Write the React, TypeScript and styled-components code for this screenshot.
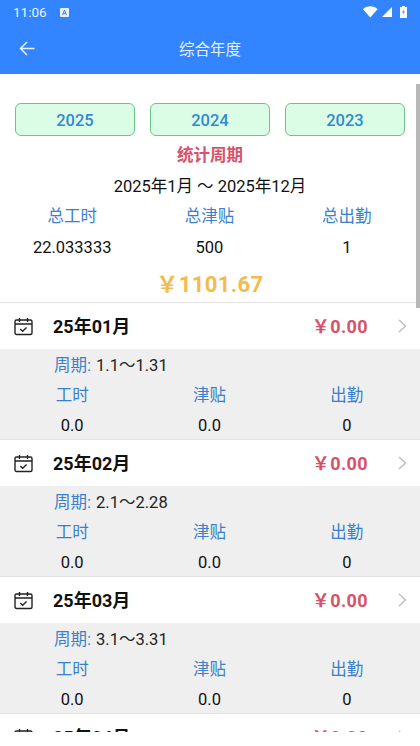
import React from "react";
import styled, { createGlobalStyle } from "styled-components";

const GlobalStyle = createGlobalStyle`
  html, body {
    margin: 0;
    padding: 0;
    background: #fff;
    font-family: Roboto, "Noto Sans CJK SC", sans-serif;
  }
  * { box-sizing: border-box; }
`;

const Screen = styled.div`
  position: relative;
  width: 420px;
  height: 746px;
  overflow: hidden;
  background: #fff;
`;

const Top = styled.header`
  height: 74px;
  background: #3385ff;
  color: #fff;
`;

const StatusBar = styled.div`
  height: 24px;
  padding: 0 13px 0 13px;
  display: flex;
  align-items: center;
  gap: 13px;
  font-size: 13.5px;
  color: #e8f1ff;
`;

const StatusRight = styled.div`
  margin-left: auto;
  display: flex;
  align-items: center;
  gap: 7px;
`;

const NavBar = styled.div`
  height: 48px;
  padding: 0 17px 0 19px;
  display: flex;
  align-items: center;
`;

const Title = styled.div`
  flex: 1;
  text-align: center;
  font-size: 15.5px;
  padding-right: 18px;
  color: #e8f1ff;
`;

const Body = styled.main`
  height: 658px;
  overflow: hidden;
`;

const Summary = styled.section`
  padding-top: 29px;
  height: 228px;
  text-align: center;
`;

const Years = styled.div`
  display: flex;
  justify-content: space-between;
  padding: 0 15px;
`;

const YearButton = styled.div`
  width: 120px;
  height: 33px;
  line-height: 33px;
  background: #dcfde5;
  border: 1px solid #6cc487;
  border-radius: 6px;
  color: #2f8ad0;
  font-size: 16.5px;
  font-weight: 500;
  text-align: center;
`;

const PeriodLabel = styled.div`
  margin-top: 8px;
  height: 24px;
  line-height: 24px;
  font-size: 16.5px;
  font-weight: 700;
  color: #d8526a;
`;

const PeriodValue = styled.div`
  margin-top: 7px;
  height: 24px;
  line-height: 24px;
  font-size: 16.5px;
  color: #111;
`;

const Stats = styled.div`
  display: grid;
  grid-template-columns: repeat(3, 1fr);
  padding: 0 4.5px 0 3.5px;
  text-align: center;
`;

const StatLabel = styled.div<{ $top: number }>`
  margin-top: ${(p) => p.$top}px;
  height: 24px;
  line-height: 24px;
  font-size: 16.5px;
  color: #3a80cc;
`;

const StatValue = styled.div<{ $top: number }>`
  margin-top: ${(p) => p.$top}px;
  height: 24px;
  line-height: 24px;
  font-size: 16.5px;
  color: #111;
`;

const Total = styled.div`
  margin-top: 10px;
  height: 30px;
  line-height: 30px;
  font-size: 22px;
  font-weight: 700;
  letter-spacing: 0.4px;
  color: #f2bc4c;
`;

const MonthRow = styled.div`
  height: 47px;
  border-top: 1px solid #e2e2e2;
  padding: 0 13px 0 14px;
  display: flex;
  align-items: center;
  background: #fff;
`;

const MonthName = styled.div`
  margin-left: 20px;
  margin-top: -2px;
  font-size: 18px;
  font-weight: 700;
  color: #111;
`;

const Money = styled.div`
  margin-left: auto;
  margin-right: 30px;
  margin-top: -2px;
  font-size: 18px;
  font-weight: 700;
  letter-spacing: 0.4px;
  color: #d8526a;
`;

const Detail = styled.div`
  height: 90px;
  background: #efefef;
  padding-top: 4px;
`;

const Cycle = styled.div`
  height: 24px;
  line-height: 24px;
  margin-top: 1px;
  padding-left: 54px;
  font-size: 16.5px;
  color: #222;
`;

const CycleKey = styled.span`
  color: #3a80cc;
  margin-right: 1px;
`;

const Scrollbar = styled.div`
  position: absolute;
  right: 0;
  top: 84px;
  width: 4px;
  height: 224px;
  background: #b8b8b8;
`;

const CalendarIcon = () => (
  <svg width="19" height="19" viewBox="0 0 19 19" fill="none" stroke="#222" strokeWidth="1.4">
    <rect x="1" y="3" width="17" height="14.5" rx="1.5" />
    <path d="M1 7h17M5.5 1v4M13.5 1v4" />
    <path d="M6.3 12l2.3 2.2 4-3.8" />
  </svg>
);

const Chevron = () => (
  <svg width="9" height="14" viewBox="0 0 9 14" fill="none" stroke="#bdbdbd" strokeWidth="1.4">
    <path d="M1 1l6.5 6L1 13" />
  </svg>
);

const months = [
  { name: "25年01月", cycle: "1.1～1.31" },
  { name: "25年02月", cycle: "2.1～2.28" },
  { name: "25年03月", cycle: "3.1～3.31" },
  { name: "25年04月", cycle: "4.1～4.30" },
];

export default function App() {
  return (
    <Screen>
      <GlobalStyle />
      <Top>
        <StatusBar>
          <span>11:06</span>
          <svg width="9" height="9" viewBox="0 0 9 9">
            <rect width="9" height="9" rx="1" fill="#e8f1ff" />
            <path d="M2.6 7L4.5 2l1.9 5M3.3 5.4h2.4" stroke="#3385ff" strokeWidth="1" fill="none" />
          </svg>
          <StatusRight>
            <svg width="30" height="12" viewBox="0 0 30 12" fill="#fff">
              <path d="M0 3.2C4-.6 10.500-.6 14.500 3.200L7.250 11.500z" />
              <path d="M29 1v10H19z" />
            </svg>
            <svg width="7" height="12" viewBox="0 0 7 12">
              <path d="M2 0h3v1h2v11H0V1h2z" fill="#fff" />
              <path d="M3.800 3L2.200 6.600h1.300L3.100 9l1.700-3.500H3.600z" fill="#3385ff" />
            </svg>
          </StatusRight>
        </StatusBar>
        <NavBar>
          <svg width="16" height="15" viewBox="0 0 16 15" fill="none" stroke="#e8f1ff" strokeWidth="1.5">
            <path d="M15.500 7.500H1.500M8 1L1.500 7.500 8 14" />
          </svg>
          <Title>综合年度</Title>
        </NavBar>
      </Top>
      <Body>
        <Summary>
          <Years>
            <YearButton>2025</YearButton>
            <YearButton>2024</YearButton>
            <YearButton>2023</YearButton>
          </Years>
          <PeriodLabel>统计周期</PeriodLabel>
          <PeriodValue>2025年1月 ～ 2025年12月</PeriodValue>
          <Stats>
            <StatLabel $top={6}>总工时</StatLabel>
            <StatLabel $top={6}>总津贴</StatLabel>
            <StatLabel $top={6}>总出勤</StatLabel>
            <StatValue $top={7}>22.033333</StatValue>
            <StatValue $top={7}>500</StatValue>
            <StatValue $top={7}>1</StatValue>
          </Stats>
          <Total>￥1101.67</Total>
        </Summary>
        {months.map((m) => (
          <React.Fragment key={m.name}>
            <MonthRow>
              <CalendarIcon />
              <MonthName>{m.name}</MonthName>
              <Money>￥0.00</Money>
              <Chevron />
            </MonthRow>
            <Detail>
              <Cycle>
                <CycleKey>周期:</CycleKey> {m.cycle}
              </Cycle>
              <Stats>
                <StatLabel $top={6}>工时</StatLabel>
                <StatLabel $top={6}>津贴</StatLabel>
                <StatLabel $top={6}>出勤</StatLabel>
                <StatValue $top={6}>0.0</StatValue>
                <StatValue $top={6}>0.0</StatValue>
                <StatValue $top={6}>0</StatValue>
              </Stats>
            </Detail>
          </React.Fragment>
        ))}
      </Body>
      <Scrollbar />
    </Screen>
  );
}
